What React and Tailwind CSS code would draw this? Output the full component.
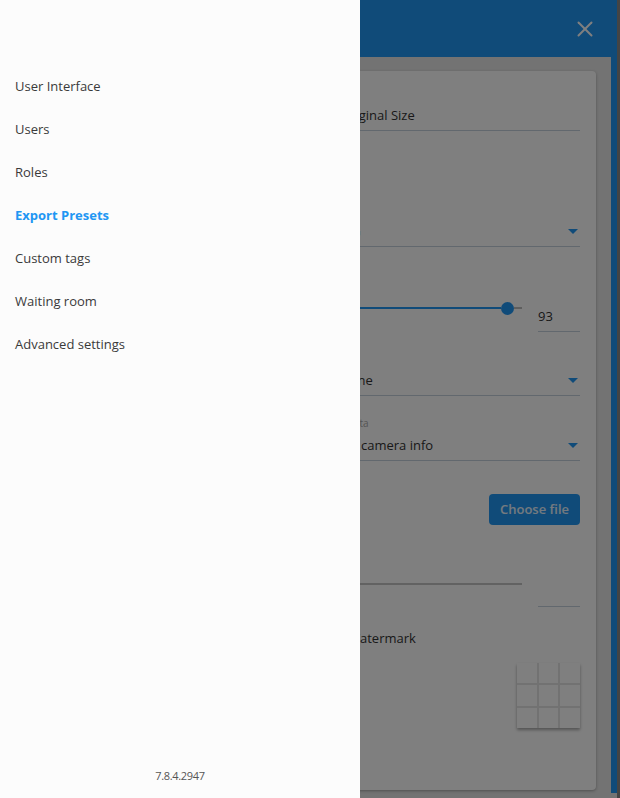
import React from 'react';
import { X } from 'lucide-react';

const menu = [
  'User Interface',
  'Users',
  'Roles',
  'Export Presets',
  'Custom tags',
  'Waiting room',
  'Advanced settings',
];

// little blue caret used by the dropdowns
function Caret() {
  return <span className="mr-[2px] h-0 w-0 border-x-[5px] border-t-[5px] border-x-transparent border-t-[#2196f3]" />;
}

// left column is covered by the drawer, only the controls column shows
function Row({ className = '', children }) {
  return (
    <div className={`flex ${className}`}>
      <div className="w-[294px] shrink-0 mr-4" />
      <div className="flex-1 min-w-0">{children}</div>
    </div>
  );
}

function Field({ value, caret }) {
  return (
    <div className="flex items-center justify-between border-b border-[#c5d1dd] pb-[5px]">
      <span className="text-[13px] leading-5 text-[#333]">{value}</span>
      {caret && <Caret />}
    </div>
  );
}

function Slider({ value, thumb }) {
  return (
    <div className="flex items-start">
      <div className="flex-1 h-[12px] -mt-[4px] flex items-center">
        {thumb ? (
          <>
            <div className="flex-1 h-[2px] bg-[#2196f3]" />
            <div className="w-[13px] h-[13px] rounded-full bg-[#2196f3]" />
            <div className="w-[8px] h-[2px] bg-[#bdbdbd]" />
          </>
        ) : (
          <div className="flex-1 h-[2px] bg-[#c4c4c4] mt-[2px]" />
        )}
      </div>
      <div className="w-[42px] ml-4 border-b border-[#c5d1dd] pb-[5px]">
        <span className="block h-5 text-[13px] leading-5 text-[#333]">{value}</span>
      </div>
    </div>
  );
}

function PresetDialog() {
  return (
    <div className="flex h-full">
      <div className="w-[617px] flex flex-col bg-[#e6e6e6]">
        <div className="h-[57px] shrink-0 bg-[#2196f3] flex items-center justify-end pr-[19px]">
          <X size={26} strokeWidth={1.8} className="text-white" />
        </div>
        <div className="flex-1 min-h-0 flex">
          <div className="flex-1 pt-[14px] pl-[14px] pr-[15px] pb-[8px]">
            <div className="h-full bg-white rounded-[4px] shadow-[0_1px_3px_rgba(0,0,0,0.3)] px-4 pt-[34px]">
              <Row>
                <Field value="Original Size" />
              </Row>
              <Row className="mt-[90px]">
                <Field value="JPG" caret />
              </Row>
              <Row className="mt-[59px]">
                <Slider value="93" thumb />
              </Row>
              <Row className="mt-[38px]">
                <Field value="None" caret />
              </Row>
              <Row className="mt-[20px]">
                <div className="text-[10px] leading-[14px] text-[#aaa] -ml-[16px]">Metadata</div>
                <div className="mt-[5px]">
                  <Field value="No camera info" caret />
                </div>
              </Row>
              <Row className="mt-[33px]">
                <div className="flex justify-end">
                  <button className="w-[91px] h-[31px] rounded-[4px] bg-[#2196f3] text-white/90 text-[13px] font-semibold">
                    Choose file
                  </button>
                </div>
              </Row>
              <Row className="mt-[56px]">
                <Slider value="" />
              </Row>
              <Row className="mt-[21px]">
                <div className="ml-[8px] text-[13px] leading-5 text-[#333]">Watermark</div>
              </Row>
              <Row className="mt-[15px]">
                <div className="flex justify-end">
                  <div className="w-[63px] h-[65px] grid grid-cols-3 grid-rows-3 gap-[2px] bg-[#e4e4e4] shadow-[0_2px_3px_rgba(0,0,0,0.35)]">
                    {Array.from({ length: 9 }).map((_, i) => (
                      <div key={i} className="bg-white" />
                    ))}
                  </div>
                </div>
              </Row>
            </div>
          </div>
          <div className="w-[6px] flex flex-col">
            <div className="h-[736px] bg-[#2196f3]" />
          </div>
        </div>
      </div>
      <div className="flex-1 bg-[#888]" />
    </div>
  );
}

export default function App() {
  return (
    <div className="relative h-screen w-full overflow-hidden font-['Open_Sans',sans-serif]">
      <PresetDialog />
      <div className="absolute inset-0 bg-black/50" />
      <aside className="absolute left-0 top-0 h-full w-[360px] bg-[#fcfcfc] flex flex-col">
        <nav className="pt-[65px]">
          {menu.map((item) => (
            <div
              key={item}
              className={`h-[43px] flex items-center px-[15px] text-[13px] ${
                item === 'Export Presets' ? 'font-bold text-[#2196f3]' : 'text-[#3a3a3a]'
              }`}
            >
              {item}
            </div>
          ))}
        </nav>
        <div className="mt-auto pb-[14px] text-center text-[11px] tracking-[-0.03em] text-[#555]">7.8.4.2947</div>
      </aside>
    </div>
  );
}
